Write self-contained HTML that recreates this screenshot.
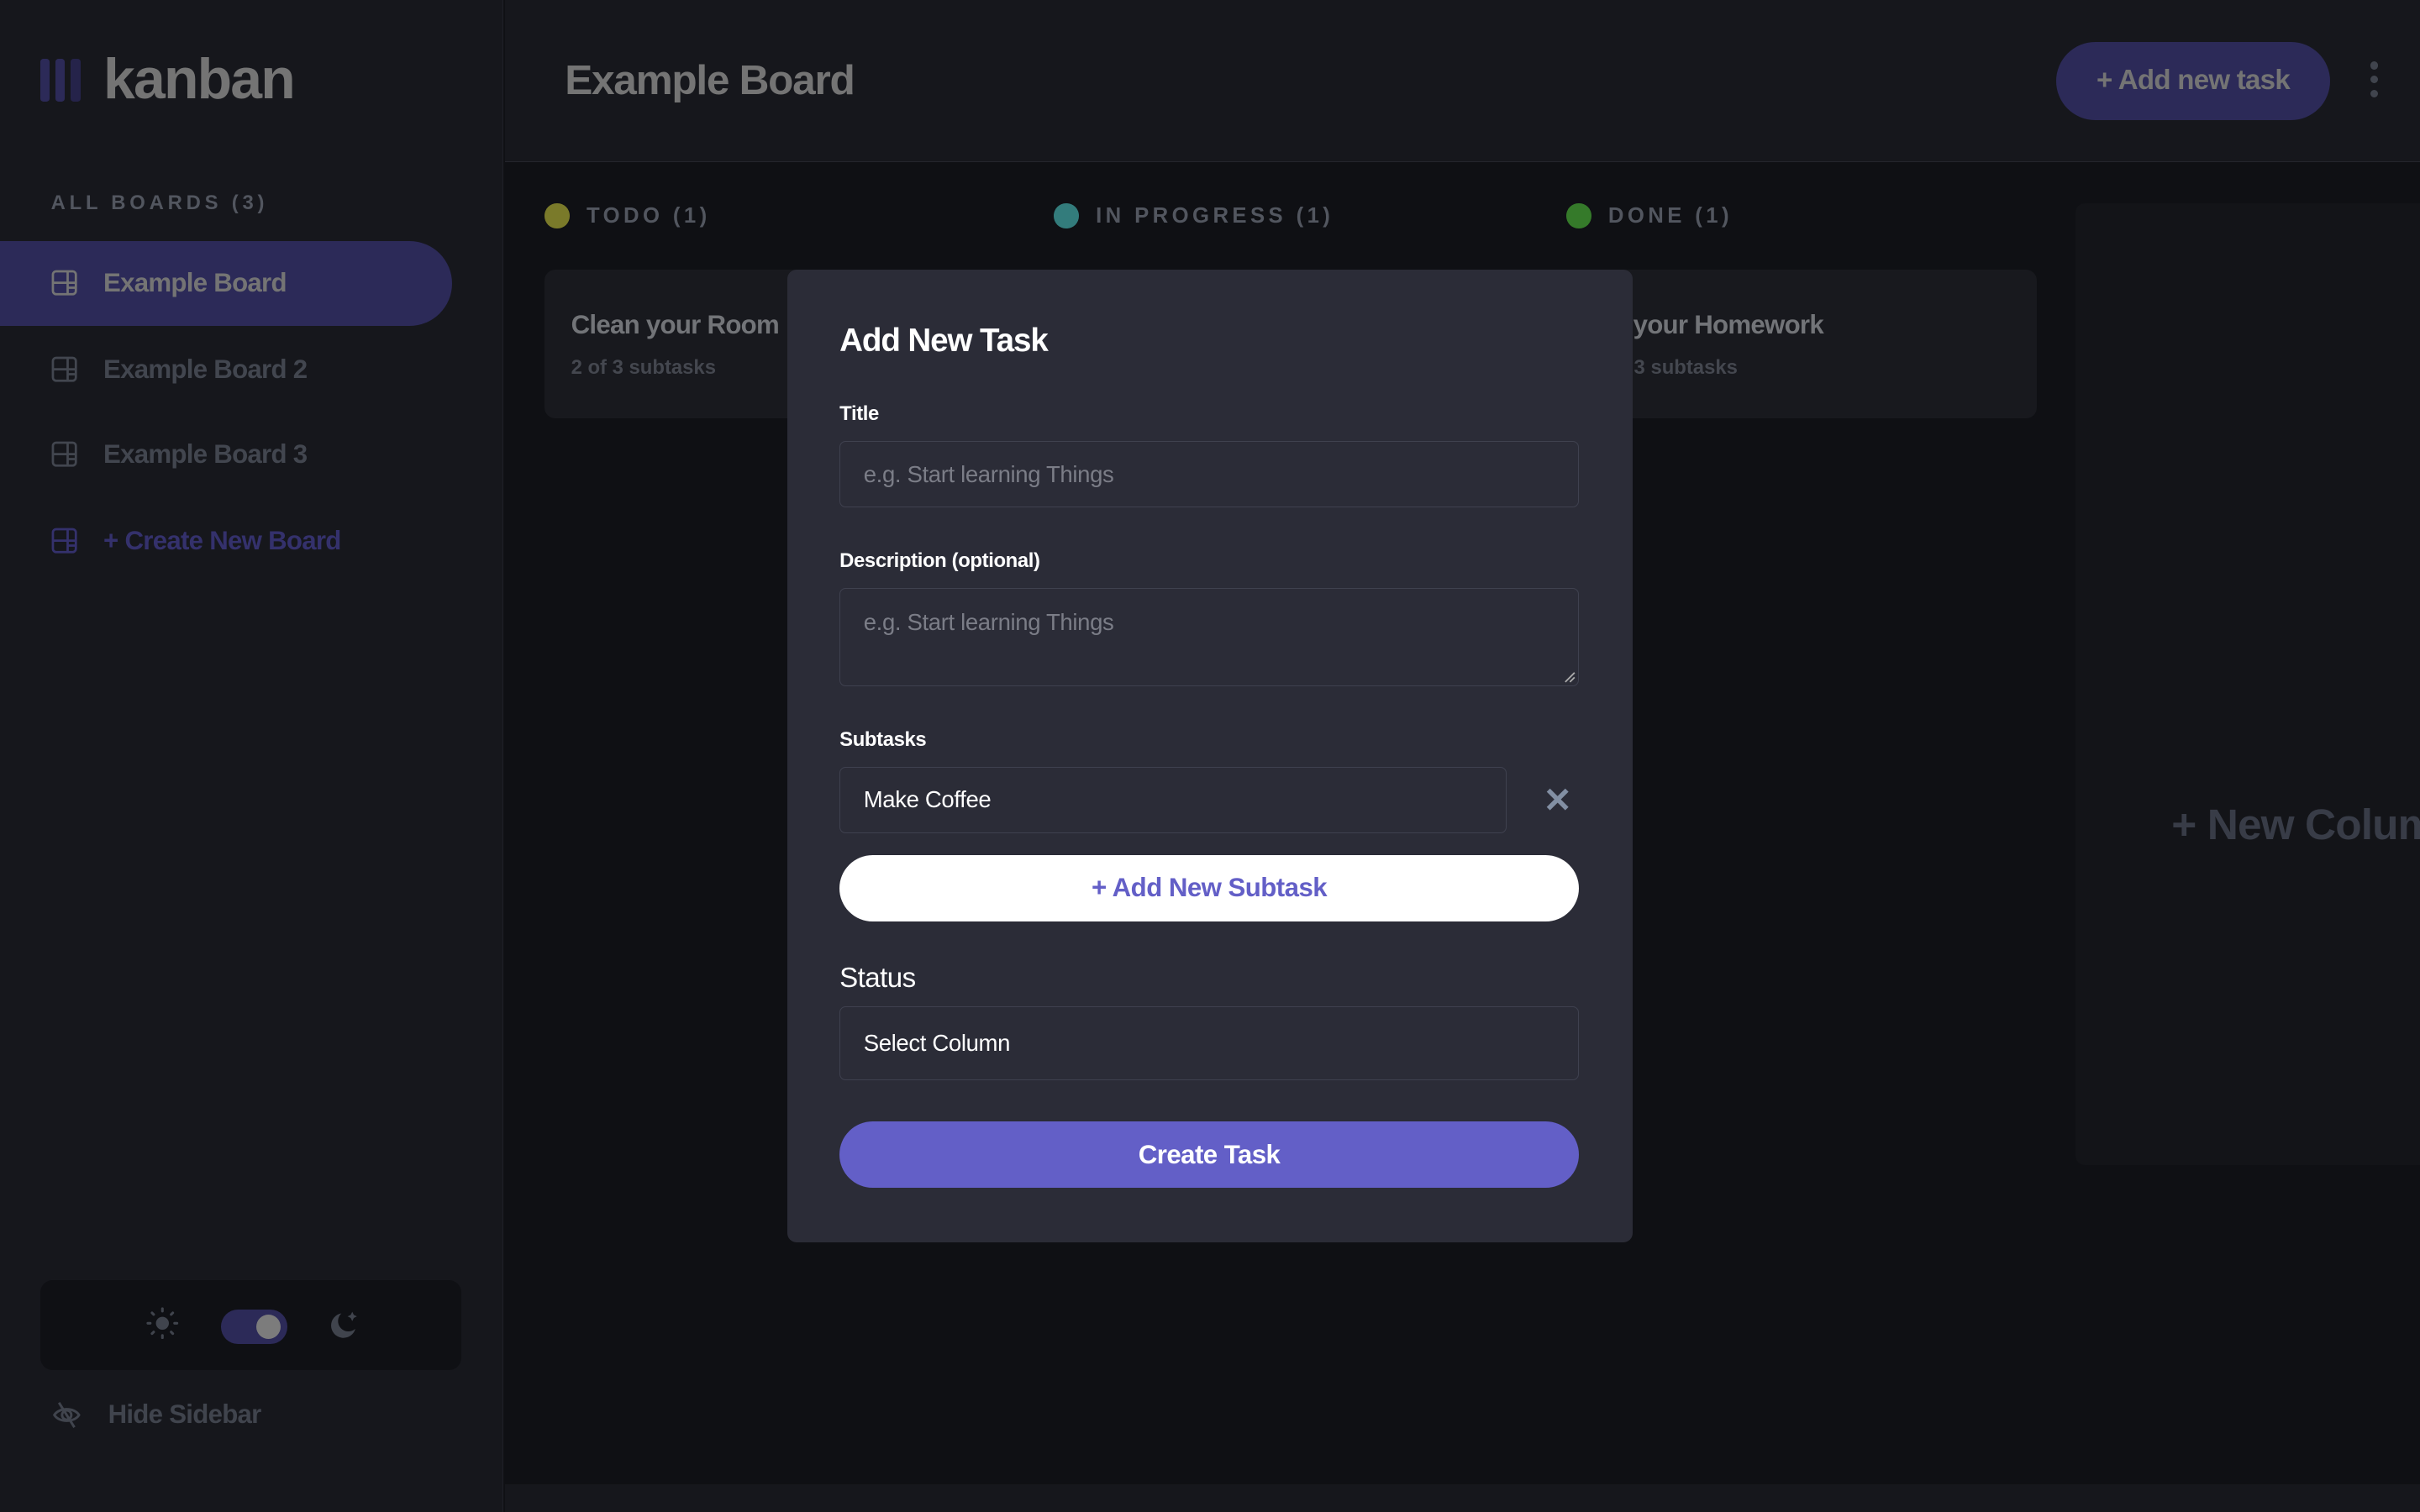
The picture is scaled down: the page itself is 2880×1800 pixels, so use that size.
<!DOCTYPE html>
<html><head><meta charset="utf-8"><style>
*{box-sizing:border-box;margin:0;padding:0}
html,body{width:2880px;height:1800px;overflow:hidden;background:#0f1014}
#w{zoom:1.836735;width:1568px;height:980px;position:relative;font-family:"Liberation Sans",sans-serif;background:#0f1014;overflow:hidden}
.a{position:absolute}
.side{left:0;top:0;width:326px;height:980px;background:#16171c;border-right:1px solid #202128}
.hdr{left:327px;top:0;width:1241px;height:105px;background:#16171c;border-bottom:1px solid #24252c}
.item{left:0;width:293px;height:55px;border-radius:0 28px 28px 0;display:flex;align-items:center;padding-left:33px;font-weight:bold;font-size:17px;color:#42464f;letter-spacing:-.4px}
.item svg{margin-right:17px}
.colh{font-size:14px;font-weight:bold;letter-spacing:2.4px;color:#52565f;display:flex;align-items:center}
.dot{width:16px;height:16px;border-radius:50%;margin-right:11px}
.card{top:175px;height:96px;background:#18191e;border-radius:7px;padding:26px 17px}
.card b{display:block;font-size:17px;color:#727478;letter-spacing:-.4px}
.card span{display:block;margin-top:10px;font-size:13px;font-weight:bold;color:#44474f}
.modal{left:510px;top:175px;width:548px;height:630px;background:#2b2c37;border-radius:6px}
.lbl{left:34px;font-size:13px;font-weight:bold;color:#fff;letter-spacing:-.2px}
.inp{left:34px;width:479px;border:1px solid #3f414f;border-radius:4px;font-size:15px;color:#7b7d87;padding-left:15px;display:flex;align-items:center;letter-spacing:-.2px}
.btn{left:34px;width:479px;height:43px;border-radius:22px;display:flex;align-items:center;justify-content:center;font-weight:bold;font-size:17px;letter-spacing:-.3px}
</style></head><body><div id="w">
<div class="a side"></div>
<div class="a hdr"></div>
<div class="a" style="left:26px;top:38px;width:6px;height:28px;background:#2c2a58;border-radius:2px"></div>
<div class="a" style="left:36px;top:38px;width:6px;height:28px;background:#2c2a58;border-radius:2px"></div>
<div class="a" style="left:46px;top:38px;width:6px;height:28px;background:#25234a;border-radius:2px"></div>
<div class="a" style="left:67px;top:30px;font-size:37px;font-weight:bold;color:#747474;letter-spacing:-1px">kanban</div>
<div class="a" style="left:33px;top:124px;font-size:13px;font-weight:bold;letter-spacing:2.6px;color:#52565f">ALL BOARDS (3)</div>
<div class="a item" style="top:156px;background:#2c2a58;color:#747474"><svg width="17" height="17" viewBox="0 0 16 16"><g fill="none" stroke="#747474" stroke-width="1.4"><rect x="1" y="1" width="14" height="14" rx="2"/><path d="M1 8h14M10 1v14M10 11h5"/></g></svg>Example Board</div>
<div class="a item" style="top:212px"><svg width="17" height="17" viewBox="0 0 16 16"><g fill="none" stroke="#42464f" stroke-width="1.4"><rect x="1" y="1" width="14" height="14" rx="2"/><path d="M1 8h14M10 1v14M10 11h5"/></g></svg>Example Board 2</div>
<div class="a item" style="top:267px"><svg width="17" height="17" viewBox="0 0 16 16"><g fill="none" stroke="#42464f" stroke-width="1.4"><rect x="1" y="1" width="14" height="14" rx="2"/><path d="M1 8h14M10 1v14M10 11h5"/></g></svg>Example Board 3</div>
<div class="a item" style="top:323px;color:#34316c"><svg width="17" height="17" viewBox="0 0 16 16"><g fill="none" stroke="#34316c" stroke-width="1.4"><rect x="1" y="1" width="14" height="14" rx="2"/><path d="M1 8h14M10 1v14M10 11h5"/></g></svg>+ Create New Board</div>
<div class="a" style="left:26px;top:830px;width:273px;height:58px;background:#0f1014;border-radius:8px"></div>
<svg class="a" style="left:95px;top:847px" width="21" height="21" viewBox="0 0 20 20"><circle cx="10" cy="10" r="4" fill="#40444d"/><g stroke="#40444d" stroke-width="1.6" stroke-linecap="round"><path d="M10 1v1.5M10 17.5V19M1 10h1.5M17.5 10H19M3.6 3.6l1 1M15.4 15.4l1 1M3.6 16.4l1-1M15.4 4.6l1-1"/></g></svg>
<div class="a" style="left:143px;top:849px;width:43px;height:22px;border-radius:11px;background:#2c2a58"></div>
<div class="a" style="left:166px;top:852px;width:16px;height:16px;border-radius:50%;background:#7c7c7c"></div>
<svg class="a" style="left:211px;top:848px" width="22" height="22" viewBox="0 0 22 22"><path d="M10 3a8 8 0 1 0 9 10a6.5 6.5 0 0 1 -9 -10z" fill="#40444d"/><path d="M17 2l1 2 2 1-2 1-1 2-1-2-2-1 2-1z" fill="#40444d"/></svg>
<svg class="a" style="left:33px;top:908px" width="20" height="18" viewBox="0 0 20 18"><g fill="none" stroke="#40444d" stroke-width="1.6"><path d="M2 9c3-5 13-5 16 0c-3 5-13 5-16 0z"/><circle cx="10" cy="9" r="3"/><path d="M5 1l10 16"/></g></svg>
<div class="a" style="left:70px;top:907px;font-size:17px;font-weight:bold;color:#40444d;letter-spacing:-.4px">Hide Sidebar</div>
<div class="a" style="left:366px;top:36px;font-size:27px;font-weight:bold;color:#747474;letter-spacing:-.7px">Example Board</div>
<div class="a" style="left:1332px;top:27px;width:178px;height:51px;border-radius:26px;background:#2c2a58;color:#747474;font-weight:bold;font-size:18px;display:flex;align-items:center;justify-content:center;letter-spacing:-.4px">+ Add new task</div>
<div class="a" style="left:1536px;top:40px;width:5px;height:5px;border-radius:50%;background:#40444d"></div>
<div class="a" style="left:1536px;top:49px;width:5px;height:5px;border-radius:50%;background:#40444d"></div>
<div class="a" style="left:1536px;top:58px;width:5px;height:5px;border-radius:50%;background:#40444d"></div>
<div class="a colh" style="left:353px;top:132px"><span class="dot" style="background:#7a7a2a"></span>TODO (1)</div>
<div class="a colh" style="left:683px;top:132px"><span class="dot" style="background:#337c7c"></span>IN PROGRESS (1)</div>
<div class="a colh" style="left:1015px;top:132px"><span class="dot" style="background:#357a2a"></span>DONE (1)</div>
<div class="a card" style="left:353px;width:305px"><b>Clean your Room</b><span>2 of 3 subtasks</span></div>
<div class="a card" style="left:683px;width:305px"><b>Clean</b><span>1 of 3 subtasks</span></div>
<div class="a card" style="left:1015px;width:305px"><b>Do your Homework</b><span>2 of 3 subtasks</span></div>
<div class="a" style="left:1345px;top:132px;width:260px;height:623px;background:#131418;border-radius:6px"></div>
<div class="a" style="left:1407px;top:518px;font-size:28px;font-weight:bold;color:#383c47;white-space:nowrap;letter-spacing:-.5px">+ New Column</div>
<div class="a" style="left:327px;top:962px;width:1241px;height:18px;background:#16171c"></div>
<div class="a modal">
<div class="a" style="left:34px;top:34px;font-size:21px;font-weight:bold;color:#fff;letter-spacing:-.6px">Add New Task</div>
<div class="a lbl" style="top:86px">Title</div>
<div class="a inp" style="top:111px;height:43px">e.g. Start learning Things</div>
<div class="a lbl" style="top:181px">Description (optional)</div>
<div class="a inp" style="top:206px;height:64px;align-items:flex-start;padding-top:13px">e.g. Start learning Things</div>
<svg class="a" style="left:503px;top:260px" width="8" height="8" viewBox="0 0 8 8"><path d="M1 7L7 1M4 7L7 4" stroke="#aaa" stroke-width="1"/></svg>
<div class="a lbl" style="top:297px">Subtasks</div>
<div class="a inp" style="top:322px;height:43px;width:432px;color:#fff">Make Coffee</div>
<svg class="a" style="left:491px;top:335px" width="16" height="16" viewBox="0 0 16 16"><path d="M2 2l12 12M14 2L2 14" stroke="#828fa3" stroke-width="3"/></svg>
<div class="a btn" style="top:379px;background:#fff;color:#635fc7">+ Add New Subtask</div>
<div class="a" style="left:34px;top:449px;font-size:18px;color:#fff;letter-spacing:-.3px">Status</div>
<div class="a inp" style="top:477px;height:48px;color:#fff">Select Column</div>
<div class="a btn" style="top:552px;background:#635fc7;color:#fff">Create Task</div>
</div>
</div></body></html>
